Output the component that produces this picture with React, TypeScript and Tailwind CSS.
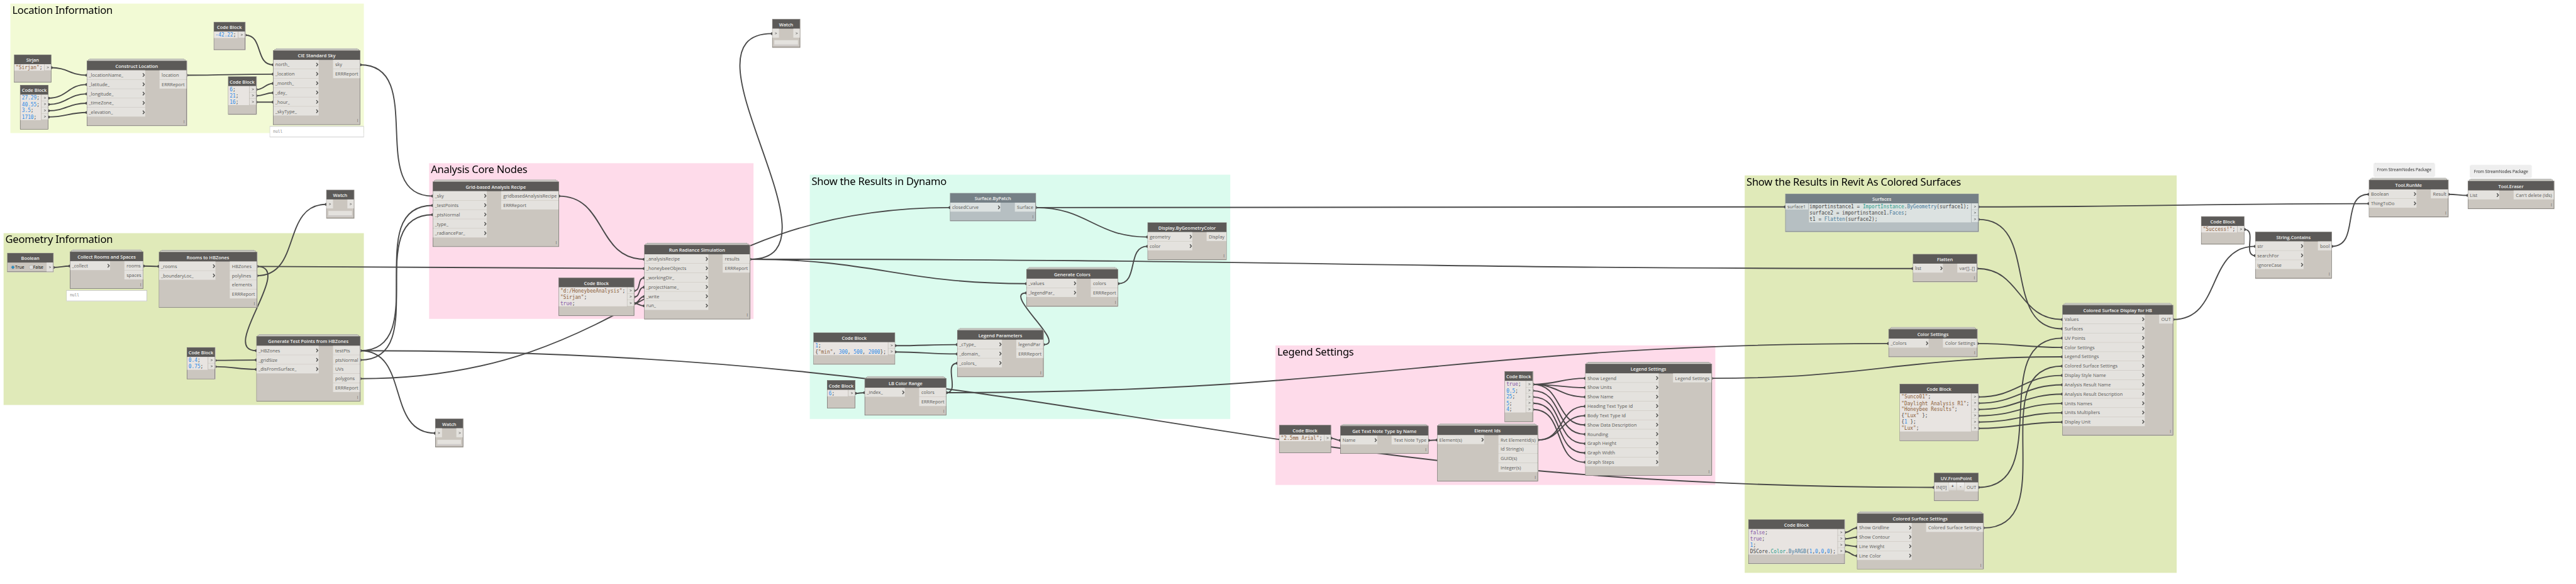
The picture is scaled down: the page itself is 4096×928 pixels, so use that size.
import React from "react";

const UI_FONT = "font-['Open_Sans','Noto_Sans',sans-serif]";
const CODE_FONT = "font-['DejaVu_Sans_Mono','Liberation_Mono',monospace]";

type Group = { x: number; y: number; w: number; h: number; title: string; tone: string };

const groups: Group[] = [
  { x: 29, y: 10, w: 986, h: 361, title: "Location Information", tone: "bg-[#f2fad5]" },
  { x: 10, y: 650, w: 1005, h: 479, title: "Geometry Information", tone: "bg-[#e0eab9]" },
  { x: 1197, y: 455, w: 905, h: 434, title: "Analysis Core Nodes", tone: "bg-[#fedbea]" },
  { x: 2259, y: 487, w: 1173, h: 681, title: "Show the Results in Dynamo", tone: "bg-[#dbfbee]" },
  { x: 3558, y: 963, w: 1227, h: 389, title: "Legend Settings", tone: "bg-[#fedbea]" },
  { x: 4867, y: 489, w: 1205, h: 1108, title: "Show the Results in Revit As Colored Surfaces", tone: "bg-[#e0eab9]" },
];

// Code tokens: n = number, s = string, k = keyword, c = class, m = method, t = plain
type Token = [kind: "n" | "s" | "k" | "c" | "m" | "t", text: string];

const tokenTone: Record<Token[0], string> = {
  n: "text-[#2d8be6]",
  s: "text-[#8b5e3a]",
  k: "text-[#8656a6]",
  c: "text-[#2e9e8c]",
  m: "text-[#44799b]",
  t: "text-[#444444]",
};

type NodeData = {
  id: string;
  x: number;
  y: number;
  w: number;
  title: string;
  kind?: "code" | "watch" | "bool" | "uv";
  blue?: boolean;
  custom?: boolean;
  inW?: number;
  outX?: number;
  ins?: string[];
  outs?: string[];
  code?: Token[][];
  codeIn?: string;
};

const num = (v: string): Token[] => [["n", v], ["t", ";"]];
const str = (v: string): Token[] => [["s", `"${v}"`], ["t", ";"]];
const key = (v: string): Token[] => [["k", v], ["t", ";"]];

const nodes: NodeData[] = [
  // Location
  { id: "north", x: 596, y: 61, w: 88, title: "Code Block", kind: "code", code: [num("-42.22")] },
  { id: "sirjan", x: 39, y: 152, w: 104, title: "Sirjan", kind: "code", code: [str("Sirjan")] },
  { id: "latlon", x: 56, y: 237, w: 79, title: "Code Block", kind: "code", code: [num("27.29"), num("40.55"), num("3.5"), num("1710")] },
  { id: "loc", x: 242, y: 169, w: 279, title: "Construct Location", custom: true, inW: 162, outX: 203, ins: ["_locationName_", "_latitude_", "_longitude_", "_timeZone_", "_elevation_"], outs: ["location", "ERRReport"] },
  { id: "date", x: 636, y: 213, w: 79, title: "Code Block", kind: "code", code: [num("6"), num("21"), num("16")] },
  { id: "sky", x: 762, y: 140, w: 243, title: "CIE Standard Sky", custom: true, inW: 126, outX: 167, ins: ["north_", "_location", "_month_", "_day_", "_hour_", "_skyType_"], outs: ["sky", "ERRReport"] },
  // Geometry
  { id: "bool", x: 20, y: 705, w: 129, title: "Boolean", kind: "bool" },
  { id: "collect", x: 195, y: 701, w: 205, title: "Collect Rooms and Spaces", custom: true, inW: 111, outX: 152, ins: ["_collect"], outs: ["rooms", "spaces"] },
  { id: "rooms", x: 443, y: 702, w: 274, title: "Rooms to HBZones", custom: true, inW: 157, outX: 198, ins: ["_rooms", "_boundaryLoc_"], outs: ["HBZones", "polylines", "elements", "ERRReport"] },
  { id: "watchA", x: 910, y: 529, w: 78, title: "Watch", kind: "watch" },
  { id: "grid", x: 521, y: 968, w: 79, title: "Code Block", kind: "code", code: [num("0.4"), num("0.75")] },
  { id: "gen", x: 715, y: 937, w: 290, title: "Generate Test Points from HBZones", custom: true, inW: 173, outX: 214, ins: ["_HBZones", "_gridSize", "_disFromSurface_"], outs: ["testPts", "ptsNormal", "UVs", "polygons", "ERRReport"] },
  { id: "watchB", x: 1214, y: 1167, w: 78, title: "Watch", kind: "watch" },
  // Analysis
  { id: "recipe", x: 1207, y: 506, w: 352, title: "Grid-based Analysis Recipe", custom: true, inW: 150, outX: 191, ins: ["_sky", "_testPoints", "_ptsNormal", "_type_", "_radiancePar_"], outs: ["gridbasedAnalysisRecipe", "ERRReport"] },
  { id: "dir", x: 1558, y: 774, w: 211, title: "Code Block", kind: "code", code: [str("d:/HoneybeeAnalysis"), str("Sirjan"), key("true")] },
  { id: "run", x: 1797, y: 682, w: 295, title: "Run Radiance Simulation", custom: true, inW: 178, outX: 219, ins: ["_analysisRecipe", "_honeybeeObjects", "_workingDir_", "_projectName_", "_write", "run_"], outs: ["results", "ERRReport"] },
  { id: "watchC", x: 2154, y: 53, w: 78, title: "Watch", kind: "watch" },
  // Dynamo results
  { id: "patch", x: 2650, y: 538, w: 239, title: "Surface.ByPatch", blue: true, inW: 140, outX: 181, ins: ["closedCurve"], outs: ["Surface"] },
  { id: "display", x: 3201, y: 620, w: 221, title: "Display.ByGeometryColor", inW: 124, outX: 165, ins: ["geometry", "color"], outs: ["Display"] },
  { id: "colors", x: 2863, y: 750, w: 256, title: "Generate Colors", custom: true, inW: 139, outX: 180, ins: ["_values", "_legendPar_"], outs: ["colors", "ERRReport"] },
  { id: "legpar", x: 2670, y: 920, w: 241, title: "Legend Parameters", custom: true, inW: 124, outX: 165, ins: ["_cType_", "_domain_", "_colors_"], outs: ["legendPar", "ERRReport"] },
  { id: "domain", x: 2269, y: 927, w: 228, title: "Code Block", kind: "code", code: [num("1"), [["t", "{"], ["s", '"min"'], ["t", ", "], ["n", "300"], ["t", ", "], ["n", "500"], ["t", ", "], ["n", "2000"], ["t", "};"]]] },
  { id: "range", x: 2412, y: 1054, w: 228, title: "LB Color Range", custom: true, inW: 111, outX: 152, ins: ["_index_"], outs: ["colors", "ERRReport"] },
  { id: "six", x: 2307, y: 1060, w: 79, title: "Code Block", kind: "code", code: [num("6")] },
  // Legend
  { id: "arial", x: 3568, y: 1185, w: 145, title: "Code Block", kind: "code", code: [str("2.5mm Arial")] },
  { id: "note", x: 3739, y: 1187, w: 246, title: "Get Text Note Type by Name", custom: true, inW: 102, outX: 143, ins: ["Name"], outs: ["Text Note Type"] },
  { id: "ids", x: 4009, y: 1186, w: 281, title: "Element Ids", custom: true, inW: 130, outX: 171, ins: ["Element(s)"], outs: ["Rvt ElementId(s)", "Id String(s)", "GUID(s)", "Integer(s)"] },
  { id: "flags", x: 4197, y: 1035, w: 79, title: "Code Block", kind: "code", code: [key("true"), num("0.5"), num("25"), num("5"), num("4")] },
  { id: "legend", x: 4422, y: 1014, w: 353, title: "Legend Settings", custom: true, inW: 204, outX: 245, ins: ["Show Legend", "Show Units", "Show Name", "Heading Text Type Id", "Body Text Type Id", "Show Data Description", "Rounding", "Graph Height", "Graph Width", "Graph Steps"], outs: ["Legend Settings"] },
  // Revit results
  {
    id: "surfaces", x: 4980, y: 540, w: 539, title: "Surfaces", kind: "code", blue: true, codeIn: "surface1",
    code: [
      [["t", "importinstance1 = "], ["c", "ImportInstance"], ["t", "."], ["m", "ByGeometry"], ["t", "(surface1);"]],
      [["t", "surface2 = importinstance1."], ["m", "Faces"], ["t", ";"]],
      [["t", "t1 = "], ["m", "Flatten"], ["t", "(surface2);"]],
    ],
  },
  { id: "flatten", x: 5336, y: 708, w: 179, title: "Flatten", inW: 83, outX: 124, ins: ["list"], outs: ["var[]..[]"] },
  { id: "colset", x: 5268, y: 917, w: 248, title: "Color Settings", custom: true, inW: 111, outX: 152, ins: ["_Colors"], outs: ["Color Settings"] },
  {
    id: "hb", x: 5753, y: 850, w: 309, title: "Colored Surface Display for HB", custom: true, inW: 229, outX: 270,
    ins: ["Values", "Surfaces", "UV Points", "Color Settings", "Legend Settings", "Colored Surface Settings", "Display Style Name", "Analysis Result Name", "Analysis Result Description", "Units Names", "Units Multipliers", "Display Unit"],
    outs: ["OUT"],
  },
  {
    id: "names", x: 5299, y: 1070, w: 220, title: "Code Block", kind: "code",
    code: [str("Sunco01"), str("Daylight Analysis R1"), str("Honeybee Results"), [["t", "{"], ["s", '"Lux"'], ["t", " };"]], [["t", "{"], ["n", "1"], ["t", " };"]], str("Lux")],
  },
  { id: "uv", x: 5395, y: 1318, w: 124, title: "UV.FromPoint", kind: "uv" },
  { id: "css", x: 5180, y: 1431, w: 353, title: "Colored Surface Settings", custom: true, inW: 152, outX: 193, ins: ["Show Gridline", "Show Contour", "Line Weight", "Line Color"], outs: ["Colored Surface Settings"] },
  {
    id: "lines", x: 4877, y: 1448, w: 269, title: "Code Block", kind: "code",
    code: [key("false"), key("true"), num("1"), [["t", "DSCore."], ["c", "Color"], ["t", "."], ["m", "ByARGB"], ["t", "("], ["n", "1"], ["t", ","], ["n", "0"], ["t", ","], ["n", "0"], ["t", ","], ["n", "0"], ["t", ");"]]],
  },
  // Run
  { id: "runme", x: 6608, y: 501, w: 222, title: "Tool.RunMe", custom: true, inW: 132, outX: 173, ins: ["Boolean", "ThingToDo"], outs: ["Result"] },
  { id: "eraser", x: 6884, y: 504, w: 241, title: "Tool.Eraser", custom: true, inW: 87, outX: 128, ins: ["List"], outs: ["Can't delete (Ids)"] },
  { id: "success", x: 6140, y: 603, w: 121, title: "Code Block", kind: "code", code: [str("Success!")] },
  { id: "contains", x: 6291, y: 646, w: 214, title: "String.Contains", inW: 134, outX: 175, ins: ["str", "searchFor", "ignoreCase"], outs: ["bool"] },
];

// [source node, output port, target node, input port]
const wires: [string, number, string, number][] = [
  ["north", 0, "sky", 0], ["sirjan", 0, "loc", 0],
  ["latlon", 0, "loc", 1], ["latlon", 1, "loc", 2], ["latlon", 2, "loc", 3], ["latlon", 3, "loc", 4],
  ["loc", 0, "sky", 1], ["date", 0, "sky", 2], ["date", 1, "sky", 3], ["date", 2, "sky", 4],
  ["sky", 0, "recipe", 0],
  ["bool", 0, "collect", 0], ["collect", 0, "rooms", 0], ["rooms", 0, "gen", 0], ["rooms", 0, "run", 1],
  ["rooms", 1, "watchA", 0], ["grid", 0, "gen", 1], ["grid", 1, "gen", 2],
  ["gen", 0, "recipe", 1], ["gen", 0, "watchB", 0], ["gen", 0, "uv", 0], ["gen", 1, "recipe", 2], ["gen", 3, "patch", 0],
  ["recipe", 0, "run", 0], ["dir", 0, "run", 2], ["dir", 1, "run", 3], ["dir", 2, "run", 4], ["dir", 2, "run", 5],
  ["run", 0, "watchC", 0], ["run", 0, "colors", 0], ["run", 0, "flatten", 0],
  ["patch", 0, "display", 0], ["patch", 0, "surfaces", 0], ["colors", 0, "display", 1], ["legpar", 0, "colors", 1],
  ["domain", 0, "legpar", 0], ["domain", 1, "legpar", 1], ["range", 0, "legpar", 2], ["range", 0, "colset", 0], ["six", 0, "range", 0],
  ["arial", 0, "note", 0], ["note", 0, "ids", 0], ["ids", 0, "legend", 3], ["ids", 0, "legend", 4],
  ["flags", 0, "legend", 0], ["flags", 0, "legend", 1], ["flags", 0, "legend", 2], ["flags", 0, "legend", 5],
  ["flags", 1, "legend", 6], ["flags", 2, "legend", 7], ["flags", 3, "legend", 8], ["flags", 4, "legend", 9],
  ["legend", 0, "hb", 4], ["surfaces", 0, "runme", 1], ["surfaces", 2, "hb", 1], ["flatten", 0, "hb", 0],
  ["colset", 0, "hb", 3], ["uv", 0, "hb", 2], ["css", 0, "hb", 5],
  ["names", 0, "hb", 6], ["names", 1, "hb", 7], ["names", 2, "hb", 8], ["names", 3, "hb", 9], ["names", 4, "hb", 10], ["names", 5, "hb", 11],
  ["lines", 0, "css", 0], ["lines", 1, "css", 1], ["lines", 2, "css", 2], ["lines", 3, "css", 3],
  ["hb", 0, "contains", 0], ["success", 0, "contains", 1], ["contains", 0, "runme", 0], ["runme", 0, "eraser", 0],
];

const byId = new Map(nodes.map((n) => [n.id, n]));

const portY = (n: NodeData, i: number) => n.y + (n.kind === "code" ? 36.7 + 17.5 * i : 40.7 + 26 * i);

function Wires() {
  return (
    <svg className="absolute left-0 top-0" width={7186} height={1628} fill="none">
      {wires.map(([from, o, to, i]) => {
        const a = byId.get(from)!;
        const b = byId.get(to)!;
        const x1 = a.x + a.w;
        const y1 = portY(a, o);
        const x2 = b.x;
        const y2 = portY(b, i);
        const off = 0.45 * Math.hypot(x2 - x1, y2 - y1);
        return (
          <g key={`${from}${o}${to}${i}`}>
            <path d={`M${x1} ${y1}C${x1 + off} ${y1} ${x2 - off} ${y2} ${x2} ${y2}`} stroke="#484848" strokeWidth={3.3} />
            <circle cx={x1} cy={y1} r={4} fill="#484848" />
            <circle cx={x2} cy={y2} r={4} fill="#484848" />
          </g>
        );
      })}
    </svg>
  );
}

function Chevron() {
  return (
    <svg width={8} height={12} viewBox="0 0 8 12" fill="none" className="shrink-0">
      <path d="M1.4 1.2 L5.6 6 L1.4 10.8" stroke="#555553" strokeWidth={2.6} />
    </svg>
  );
}

function Arrow() {
  return (
    <svg width={7} height={6} viewBox="0 0 7 6" fill="none">
      <path d="M0.5 0.5 L6 3 L0.5 5.5" stroke="#555553" strokeWidth={1.1} />
    </svg>
  );
}

function CodeBody({ n, port }: { n: NodeData; port: string }) {
  const code = n.code!;
  return (
    <div className="flex">
      {n.codeIn && (
        <div className={`flex h-[17px] w-[63px] shrink-0 items-center pl-[5px] pt-px text-[13px] leading-none tracking-[-0.1px] text-[#5a5a58] ${port}`}>{n.codeIn}</div>
      )}
      <div className={`min-w-0 flex-1 pb-[0.5px] ${n.codeIn ? "ml-px border-l border-[#9ea6a8] pl-[2px]" : "pl-[4px]"} ${n.blue ? "bg-[#dce2e1]" : "bg-[#e8e4e1]"}`}>
        {code.map((line, i) => (
          <div key={i} className={`h-[17.5px] whitespace-pre text-[13.7px] leading-[19px] ${CODE_FONT}`}>
            {line.map(([kind, text], j) => (
              <span key={j} className={tokenTone[kind]}>{text}</span>
            ))}
          </div>
        ))}
      </div>
      <div className={`flex w-[19px] shrink-0 flex-col border-l ${n.blue ? "border-[#9ea6a8]" : "border-[#b3aea7]"}`}>
        {code.map((_, i) => (
          <div key={i} className="h-[17.5px] pb-px">
            <div className={`flex h-full items-center justify-center pt-px ${port}`}>
              <Arrow />
            </div>
          </div>
        ))}
      </div>
    </div>
  );
}

function PortBody({ n, port }: { n: NodeData; port: string }) {
  const row = `flex h-[25px] items-center whitespace-nowrap text-[13px] leading-none text-[#5a5a58] ${port}`;
  return (
    <div className="flex flex-1 items-start">
      <div className="flex shrink-0 flex-col gap-px" style={{ width: n.inW }}>
        {n.ins!.map((label) => (
          <div key={label} className={`${row} justify-between pl-[5px]`}>
            <span className="pt-[2px]">{label}</span>
            <Chevron />
          </div>
        ))}
      </div>
      <div className="flex flex-1 flex-col gap-px" style={{ marginLeft: n.outX! - n.inW! - 1 }}>
        {n.outs!.map((label) => (
          <div key={label} className={`${row} pl-[6px] pt-[2px]`}>
            {label}
          </div>
        ))}
      </div>
    </div>
  );
}

function WatchBody() {
  return (
    <div className="flex flex-1 flex-col">
      <div className="flex justify-between">
        {[0, 1].map((i) => (
          <div key={i} className="flex h-[25px] w-[18px] items-center justify-center bg-[#e4e2de]">
            <Arrow />
          </div>
        ))}
      </div>
      <div className="mx-[5px] mt-[7px] h-[12px] bg-[#e4e2de]" />
      <div className="mx-[4px] mt-px h-[2px] bg-[#d3d0d4]" />
    </div>
  );
}

function Radio({ on, label }: { on?: boolean; label: string }) {
  return (
    <div className="flex items-center text-[12px] leading-none text-black">
      <span className="flex size-[12px] items-center justify-center rounded-full border border-[#8e8f8f] bg-[#f1f1f1]">
        <span className={`size-[8px] rounded-full ${on ? "border border-[#153f5c] bg-[#2a9bd0]" : "bg-[#dcdcdc]"}`} />
      </span>
      {label}
    </div>
  );
}

function BoolBody() {
  return (
    <div className="flex flex-1 pl-[9px]">
      <div className="flex flex-1 items-center gap-[13px]">
        <Radio on label="True" />
        <Radio label="False" />
      </div>
      <div className="flex w-[18px] items-center justify-center bg-[#e4e2de]">
        <Arrow />
      </div>
    </div>
  );
}

function UvBody() {
  const button = "flex h-[22px] w-[20px] items-center justify-center bg-linear-to-b from-[#f3f3f3] to-[#d8d5d1] text-[12px] text-black";
  return (
    <div className="flex items-start gap-px text-[13px] leading-none text-[#5a5a58]">
      <div className="flex h-[25px] w-[40px] items-center bg-[#e4e2de] pl-[5px] pt-px">IN[0]</div>
      <div className={button}>+</div>
      <div className={`${button} ml-px`}>-</div>
      <div className="flex h-[25px] flex-1 items-center bg-[#e4e2de] pl-[6px] pt-px">OUT</div>
    </div>
  );
}

function nodeHeight(n: NodeData) {
  if (n.kind === "bool") return 53;
  if (n.kind === "watch") return 79;
  if (n.kind === "uv") return 78;
  if (n.kind === "code") return Math.max(78, 53.5 + 17.5 * n.code!.length);
  return 52 + 26 * Math.max(n.ins!.length, n.outs!.length);
}

function NodeCard({ n }: { n: NodeData }) {
  const port = n.blue ? "bg-[#dce2e1]" : "bg-[#e4e2de]";
  return (
    <div className="absolute" style={{ left: n.x, top: n.y, width: n.w, height: nodeHeight(n) }}>
      {n.custom && (
        <div className="absolute inset-x-0 -top-[5px] flex flex-col">
          <div className="mx-[8px] h-[2px] border border-b-0 border-[#a3a3a1] bg-[#deded8]" />
          <div className="mx-[4px] h-[4px] border border-b-0 border-[#8b8b89] bg-[#dcdcd4]" />
        </div>
      )}
      <div className={`relative flex h-full flex-col border border-[#5c5a58] ${n.blue ? "bg-[#b6bfc2]" : "bg-[#cbc6bf]"}`}>
        <div className={`flex h-[26px] shrink-0 items-center justify-center whitespace-nowrap pt-[2px] text-[13px] font-semibold leading-none text-[#f4f4f2] ${n.blue ? "bg-[#758086]" : "bg-[#5c5a58]"}`}>
          {n.title}
        </div>
        {n.kind === "code" && <CodeBody n={n} port={port} />}
        {n.kind === "watch" && <WatchBody />}
        {n.kind === "bool" && <BoolBody />}
        {n.kind === "uv" && <UvBody />}
        {!n.kind && (
          <>
            <PortBody n={n} port={port} />
            <div className="absolute bottom-[6px] right-[5px] text-[11px] leading-[8px] text-[#5a5a58]">I</div>
          </>
        )}
      </div>
    </div>
  );
}

function NullPreview({ x, y, w }: { x: number; y: number; w: number }) {
  return (
    <div
      className={`absolute flex h-[31px] items-center border border-b-2 border-[#a5a5a5] border-b-[#d1d1d1] bg-white pl-[9px] text-[10.8px] text-[#858585] ${CODE_FONT}`}
      style={{ left: x, top: y, width: w }}
    >
      null
    </div>
  );
}

function Note({ x, y }: { x: number; y: number }) {
  return (
    <div
      className="absolute flex h-[34px] w-[170px] items-center justify-center whitespace-nowrap bg-[#eeeeee] text-[11.5px] text-[#222222] shadow-[0_0_4px_rgba(0,0,0,0.25)]"
      style={{ left: x, top: y }}
    >
      From StreamNodes Package
    </div>
  );
}

export default function App() {
  return (
    <div className="h-[928px] w-[4096px] overflow-hidden bg-white">
      <div className={`relative h-[1628px] w-[7186px] origin-top-left scale-[0.57] ${UI_FONT}`}>
        {groups.map((g) => (
          <div key={g.title} className={`absolute pl-[5px] ${g.tone}`} style={{ left: g.x, top: g.y, width: g.w, height: g.h }}>
            <h2 className="whitespace-nowrap font-['Noto_Sans',sans-serif] text-[29px] leading-[34px] tracking-[-0.4px] text-black">{g.title}</h2>
          </div>
        ))}
        <Wires />
        {nodes.map((n) => (
          <NodeCard key={n.id} n={n} />
        ))}
        <NullPreview x={752} y={352} w={263} />
        <NullPreview x={185} y={809} w={225} />
        <Note x={6622} y={457} />
        <Note x={6892} y={461} />
      </div>
    </div>
  );
}
